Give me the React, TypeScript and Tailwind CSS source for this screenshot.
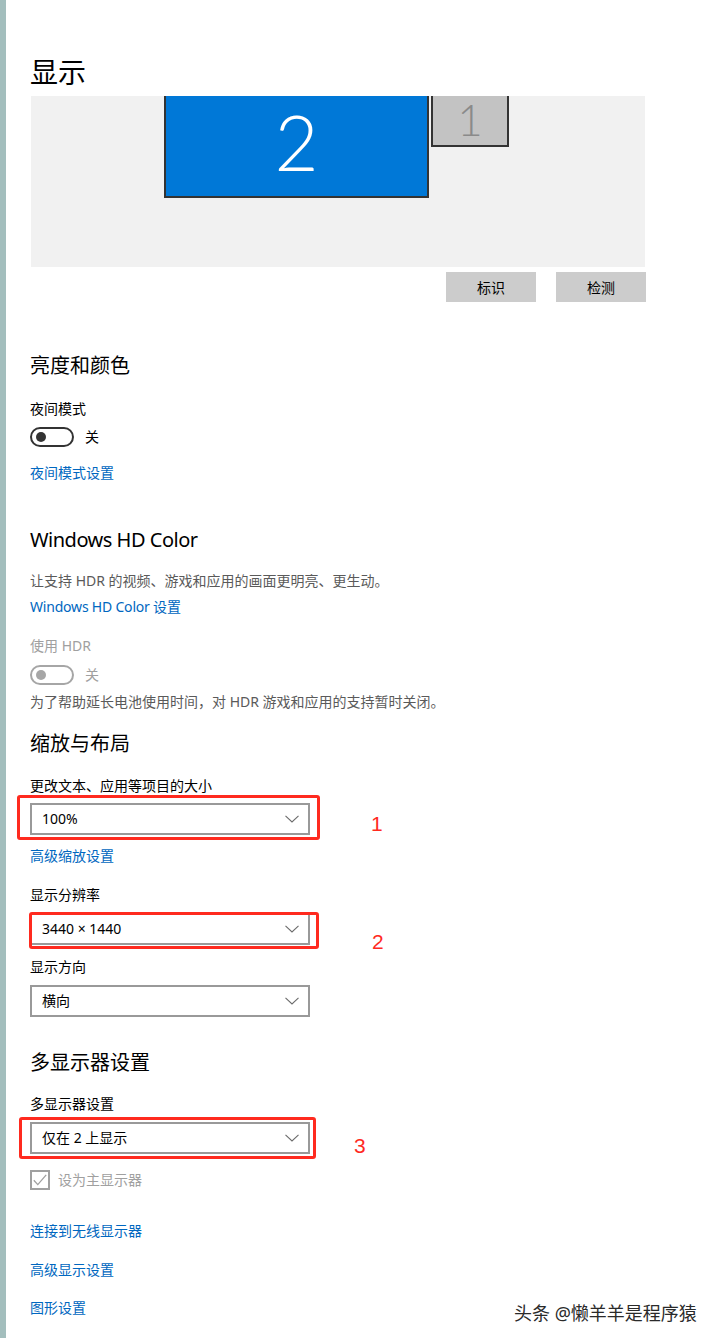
import React from "react";

const font = "font-['Noto_Sans','Noto_Sans_CJK_SC',sans-serif]";

const Toggle = ({ disabled }: { disabled?: boolean }) => (
  <div className="flex items-center h-[20px] gap-[11px]">
    <div
      className={`w-[44px] h-[20px] rounded-full border-2 flex items-center pl-[4px] ${
        disabled ? "border-[#a6a6a6]" : "border-[#333333]"
      }`}
    >
      <div className={`w-[10px] h-[10px] rounded-full ${disabled ? "bg-[#a6a6a6]" : "bg-[#333333]"}`} />
    </div>
    <span className={`text-[14px] leading-[20px] ${disabled ? "text-[#a0a0a0]" : "text-black"}`}>关</span>
  </div>
);

const Chevron = () => (
  <svg width="14" height="8" viewBox="0 0 14 8" className="shrink-0">
    <path d="M0.5 0.8 L7 7 L13.5 0.8" fill="none" stroke="#6b6b6b" strokeWidth="1.1" />
  </svg>
);

const Select = ({
  value,
  mark,
}: {
  value: string;
  mark?: { box: string; num: string; numPos: string };
}) => (
  <div className="relative w-[280px] h-[32px]">
    <div className="w-full h-full border-2 border-[#999999] flex items-center justify-between pl-[10px] pr-[9px] bg-white">
      <span className="text-[14px] leading-[20px] text-black">{value}</span>
      <Chevron />
    </div>
    {mark && (
      <>
        <div className={`absolute border-[3px] border-[#ff2a1f] rounded-[3px] ${mark.box}`} />
        <span
          className={`absolute text-[21px] leading-[22px] text-[#ff2a1f] font-['Liberation_Sans',sans-serif] ${mark.numPos}`}
        >
          {mark.num}
        </span>
      </>
    )}
  </div>
);

const Label = ({ children, className = "" }: { children: React.ReactNode; className?: string }) => (
  <div className={`text-[14px] leading-[20px] h-[20px] text-black ${className}`}>{children}</div>
);

const Link = ({ children, className = "" }: { children: React.ReactNode; className?: string }) => (
  <div className={`text-[14px] leading-[20px] h-[20px] text-[#0067c0] ${className}`}>{children}</div>
);

const Heading = ({ children, className = "" }: { children: React.ReactNode; className?: string }) => (
  <div className={`text-[20px] leading-[28px] h-[28px] text-black ${className}`}>{children}</div>
);

export default function App() {
  return (
    <div className={`relative flex w-[716px] h-[1338px] overflow-hidden bg-white ${font}`}>
      <div className="w-[6px] shrink-0 bg-[#a3bebd]" />

      <main className="flex flex-col pl-[24px] w-[710px]">
        <h1 className="text-[28px] leading-[36px] h-[36px] mt-[54px] text-black font-normal">显示</h1>

        {/* Monitor arrangement */}
        <div className="relative mt-[6px] ml-[1px] w-[614px] h-[171px] bg-[#f1f1f1]">
          <div className="absolute left-[133px] top-0 w-[265px] h-[102px] bg-[#0078d7] border-2 border-t-0 border-[#333333] flex items-center justify-center pb-[8px]">
            <span className="text-white text-[76px] leading-[76px] font-light font-['Lato','Noto_Sans',sans-serif]">2</span>
          </div>
          <div className="absolute left-[400px] top-0 w-[78px] h-[51px] bg-[#c3c3c3] border-2 border-t-0 border-[#333333] flex items-center justify-center pb-[4px]">
            <span className="text-[#8a8a8a] text-[44px] leading-[44px] font-light font-['Lato','Noto_Sans',sans-serif]">1</span>
          </div>
        </div>

        <div className="flex justify-end gap-[20px] mt-[5px] w-[616px]">
          <button className="w-[90px] h-[30px] bg-[#cccccc] text-[14px] text-black">标识</button>
          <button className="w-[90px] h-[30px] bg-[#cccccc] text-[14px] text-black">检测</button>
        </div>

        {/* Brightness */}
        <Heading className="mt-[50px]">亮度和颜色</Heading>
        <Label className="mt-[19px]">夜间模式</Label>
        <div className="mt-[8px]">
          <Toggle />
        </div>
        <Link className="mt-[16px]">夜间模式设置</Link>

        {/* HD Color */}
        <Heading className="mt-[43px] tracking-[-0.5px]">Windows HD Color</Heading>
        <div className="mt-[17px] text-[14px] leading-[20px] h-[20px] text-[#5a5a5a]">
          让支持 HDR 的视频、游戏和应用的画面更明亮、更生动。
        </div>
        <Link className="mt-[6px] tracking-[-0.2px]">Windows HD Color 设置</Link>
        <div className="mt-[19px] text-[14px] leading-[20px] h-[20px] text-[#a0a0a0]">使用 HDR</div>
        <div className="mt-[9px]">
          <Toggle disabled />
        </div>
        <div className="mt-[7px] text-[14px] leading-[20px] h-[20px] text-[#5a5a5a]">
          为了帮助延长电池使用时间，对 HDR 游戏和应用的支持暂时关闭。
        </div>

        {/* Scale and layout */}
        <Heading className="mt-[18px]">缩放与布局</Heading>
        <Label className="mt-[18px]">更改文本、应用等项目的大小</Label>
        <div className="mt-[7px]">
          <Select
            value="100%"
            mark={{ box: "left-[-13px] top-[-8px] w-[303px] h-[45px]", num: "1", numPos: "left-[341px] top-[10px]" }}
          />
        </div>
        <Link className="mt-[11px]">高级缩放设置</Link>
        <Label className="mt-[19px]">显示分辨率</Label>
        <div className="mt-[8px]">
          <Select
            value="3440 × 1440"
            mark={{ box: "left-[-1px] top-[-1px] w-[290px] h-[37px]", num: "2", numPos: "left-[342px] top-[18px]" }}
          />
        </div>
        <Label className="mt-[12px]">显示方向</Label>
        <div className="mt-[8px]">
          <Select value="横向" />
        </div>

        {/* Multiple displays */}
        <Heading className="mt-[32px]">多显示器设置</Heading>
        <Label className="mt-[17px]">多显示器设置</Label>
        <div className="mt-[8px]">
          <Select
            value="仅在 2 上显示"
            mark={{ box: "left-[-11px] top-[-5px] w-[297px] h-[42px]", num: "3", numPos: "left-[324px] top-[13px]" }}
          />
        </div>
        <div className="mt-[16px] flex items-center gap-[8px] h-[20px]">
          <div className="w-[20px] h-[20px] border-2 border-[#a0a0a0] flex items-center justify-center">
            <svg width="14" height="12" viewBox="0 0 14 12">
              <path d="M0.8 6.2 L4.8 10.6 L13.2 0.8" fill="none" stroke="#a0a0a0" strokeWidth="1.3" />
            </svg>
          </div>
          <span className="text-[14px] leading-[20px] text-[#a0a0a0]">设为主显示器</span>
        </div>

        <Link className="mt-[31px]">连接到无线显示器</Link>
        <Link className="mt-[19px]">高级显示设置</Link>
        <Link className="mt-[18px]">图形设置</Link>
      </main>

      {/* Watermark */}
      <div className="absolute left-[514px] top-[1300px] text-[18px] leading-[26px] text-[#2a2a2a] [text-shadow:1px_1px_0_#ffffff]">
        头条 @懒羊羊是程序猿
      </div>
    </div>
  );
}
